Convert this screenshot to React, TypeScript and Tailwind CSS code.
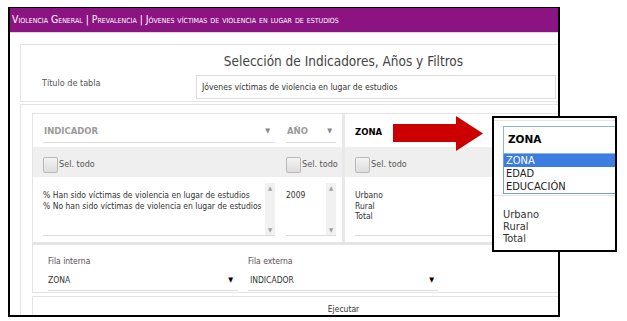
import React from "react";

function Checkbox() {
  return (
    <div className="w-[15px] h-[16px] shrink-0 rounded-[2px] border border-[#b9b9b9] bg-[linear-gradient(#f3f3f3,#dddddd)]" />
  );
}

function Scrollbar() {
  return (
    <div className="w-[10px] self-stretch bg-[#f1f1f1] flex flex-col justify-between items-center text-[#a0a0a0] text-[6px] leading-[10px]">
      <span>▲</span>
      <span>▼</span>
    </div>
  );
}

export default function App() {
  return (
    <div className="relative w-[627px] h-[321px] bg-white overflow-hidden font-['DejaVu_Sans_Condensed','Liberation_Sans',sans-serif] text-[#333]">
      {/* framed screenshot */}
      <div className="ml-[8px] mt-[7px] w-[552px] h-[310px] border-2 border-t border-black overflow-hidden flex flex-col">
        <div className="h-[25px] shrink-0 bg-[#8c1482] border-b border-[#d9d9d9] text-white text-[10.4px] pl-[2px] flex items-center whitespace-nowrap [font-variant:small-caps]">
          Violencia General | Prevalencia | Jóvenes víctimas de violencia en lugar de estudios
        </div>

        <div className="pl-[10px] pt-[11px] flex flex-col">
          {/* title card */}
          <div className="w-[647px] h-[58px] shrink-0 border border-[#e4e4e4] flex flex-col">
            <div className="pt-[8px] h-[25px] leading-[17px] text-[13.5px] text-[#444] text-center">
              Selección de Indicadores, Años y Filtros
            </div>
            <div className="mt-[5px] flex items-start">
              <div className="w-[175px] pl-[21px] pt-[1px] text-[9px] leading-[14px] text-[#555]">Título de tabla</div>
              <div className="w-[360px] h-[24px] border border-[#dcdcdc] pl-[5px] flex items-center text-[8.6px] text-[#333]">
                Jóvenes víctimas de violencia en lugar de estudios
              </div>
            </div>
          </div>

          {/* main card */}
          <div className="mt-[2px] w-[647px] h-[220px] shrink-0 border border-[#e4e4e4] pl-[11px] pt-[8px] flex flex-col">
            {/* grid box */}
            <div className="w-[623px] h-[131px] shrink-0 border border-[#e4e4e4] border-b-2 flex">
              {/* left column */}
              <div className="w-[309px] shrink-0 flex flex-col">
                <div className="h-[33px] flex items-end pb-[4px] pl-[10px] gap-[11px]">
                  <div className="w-[232px] h-[22px] border-b border-[#dcdcdc] flex items-center justify-between pl-[1px] pr-[5px]">
                    <span className="font-['DejaVu_Sans',sans-serif] font-bold text-[8.5px] text-[#9a9a9a]">INDICADOR</span>
                    <span className="text-[7px] text-[#888]">▼</span>
                  </div>
                  <div className="w-[50px] h-[22px] border-b border-[#dcdcdc] flex items-center justify-between pl-[1px] pr-[4px]">
                    <span className="font-['DejaVu_Sans',sans-serif] font-bold text-[8.5px] text-[#9a9a9a]">AÑO</span>
                    <span className="text-[7px] text-[#888]">▼</span>
                  </div>
                </div>
                <div className="h-[30px] bg-[#efefef] flex items-end pb-[4px] pl-[10px]">
                  <div className="w-[232px] flex items-center gap-[1px]">
                    <Checkbox />
                    <span className="text-[9px] text-[#555]">Sel. todo</span>
                  </div>
                  <div className="ml-[11px] flex items-center gap-[1px]">
                    <Checkbox />
                    <span className="text-[9px] text-[#555]">Sel. todo</span>
                  </div>
                </div>
                <div className="pt-[6px] pl-[10px] flex gap-[11px]">
                  <div className="w-[232px] h-[53px] border-b border-[#dcdcdc] flex">
                    <div className="flex-1 pt-[7px] text-[8.5px] leading-[11px] text-[#333] whitespace-nowrap overflow-hidden">
                      <div>% Han sido víctimas de violencia en lugar de estudios</div>
                      <div>% No han sido víctimas de violencia en lugar de estudios</div>
                    </div>
                    <Scrollbar />
                  </div>
                  <div className="w-[50px] h-[53px] border-b border-[#dcdcdc] flex">
                    <div className="flex-1 pt-[7px] text-[8.5px] leading-[11px] text-[#333]">2009</div>
                    <Scrollbar />
                  </div>
                </div>
              </div>
              {/* right column */}
              <div className="flex-1 border-l-[3px] border-[#e8e8e8] flex flex-col">
                <div className="h-[33px] flex items-end pb-[4px] pl-[10px]">
                  <div className="h-[22px] flex items-center">
                    <span className="font-['DejaVu_Sans',sans-serif] font-bold text-[8.5px] text-black">ZONA</span>
                  </div>
                </div>
                <div className="h-[30px] bg-[#efefef] flex items-end pb-[4px] pl-[10px]">
                  <div className="flex items-center gap-[1px]">
                    <Checkbox />
                    <span className="text-[9px] text-[#555]">Sel. todo</span>
                  </div>
                </div>
                <div className="pt-[6px] pl-[10px] pr-[10px]">
                  <div className="h-[53px] border-b border-[#dcdcdc] pt-[7px] text-[8.5px] leading-[10.5px] text-[#333]">
                    <div>Urbano</div>
                    <div>Rural</div>
                    <div>Total</div>
                  </div>
                </div>
              </div>
            </div>

            {/* filas box */}
            <div className="w-[623px] h-[49px] shrink-0 border border-[#e4e4e4] pl-[15px] pt-[10px] flex gap-[10px]">
              <div className="w-[190px] flex flex-col">
                <div className="text-[8.5px] leading-[12px] text-[#5c4a58]">Fila interna</div>
                <div className="mt-[3px] h-[21px] border-b border-[#dcdcdc] flex items-center justify-between pr-[5px]">
                  <span className="text-[8.5px] text-[#333]">ZONA</span>
                  <span className="text-[7px] text-black">▼</span>
                </div>
              </div>
              <div className="w-[190px] flex flex-col">
                <div className="text-[8.5px] leading-[12px] text-[#5c4a58]">Fila externa</div>
                <div className="mt-[3px] h-[21px] border-b border-[#dcdcdc] flex items-center justify-between pl-[2px] pr-[4px]">
                  <span className="text-[8.5px] text-[#333]">INDICADOR</span>
                  <span className="text-[7px] text-black">▼</span>
                </div>
              </div>
            </div>

            {/* ejecutar box */}
            <div className="mt-[3px] w-[623px] h-[40px] shrink-0 border border-[#e4e4e4] pt-[6px] text-center text-[8.5px] text-[#333]">
              Ejecutar
            </div>
          </div>
        </div>
      </div>

      {/* red arrow */}
      <svg className="absolute left-[393px] top-[116px]" width="91" height="35" viewBox="0 0 91 35">
        <polygon points="0,8 63,8 63,0 90,17.5 63,35 63,26 0,26" fill="#cc0000" />
      </svg>

      {/* zoom overlay */}
      <div className="absolute left-[492px] top-[116px] w-[125px] h-[136px] border-2 border-black bg-white overflow-hidden flex flex-col">
        <div className="mt-[2px] h-px bg-[#e6e6e6]" />
        <div className="ml-[9px] mt-[5px] w-[200px] h-[28px] border border-[#8fb0ea] pl-[4px] flex items-center font-['DejaVu_Sans',sans-serif] font-bold text-[10.5px] text-black">
          ZONA
        </div>
        <div className="ml-[9px] w-[200px] border border-[#7f9cc9] border-t-0 text-[11px] leading-[13px] text-[#222]">
          <div className="bg-[#3b7de0] text-white pl-[2px]">ZONA</div>
          <div className="pl-[2px]">EDAD</div>
          <div className="pl-[2px]">EDUCACIÓN</div>
        </div>
        <div className="mt-[1px] h-px bg-[#e3e3e3]" />
        <div className="ml-[9px] mt-[13px] text-[11px] leading-[12px] text-[#333]">
          <div>Urbano</div>
          <div>Rural</div>
          <div>Total</div>
        </div>
      </div>
    </div>
  );
}
